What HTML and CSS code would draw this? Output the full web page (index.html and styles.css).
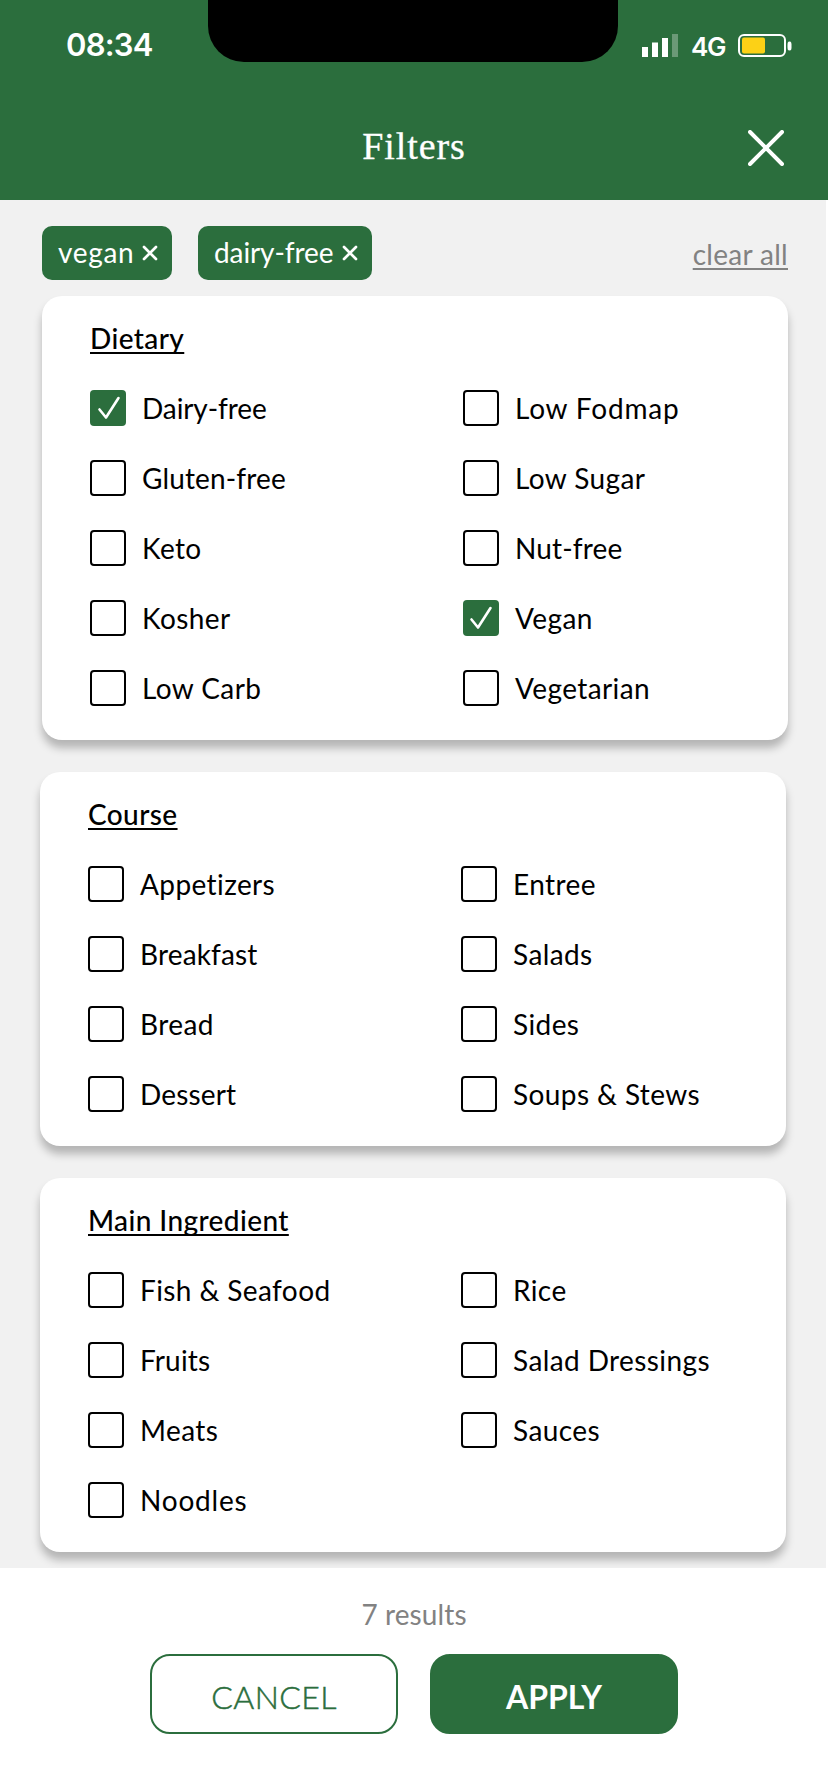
FILE: index.html
```html
<!DOCTYPE html>
<html lang="en">
<head>
<meta charset="utf-8">
<title>Filters</title>
<link rel="stylesheet" href="styles.css">
</head>
<body>
<header class="header">
  <div class="status">
    <span class="time">08:34</span>
    <div class="notch"></div>
    <div class="indicators">
      <svg class="signal" width="36" height="24" viewBox="0 0 36 24"><path fill="#fff" d="M0 14h6v10H0zM10 9.500h6V24h-6zM20 5h6v19h-6z"/><path fill="#fff" opacity=".3" d="M30 1h6v23h-6z"/></svg>
      <span class="network">4G</span>
      <svg class="battery" width="54" height="24" viewBox="0 0 54 24"><rect x="1" y="2" width="46" height="21" rx="5" fill="none" stroke="#fff" stroke-width="2"/><rect x="4" y="4.500" width="23" height="16" rx="2" fill="#fcd116"/><path fill="#fff" d="M51.500 8.500c2 0 2 1.500 2 4.500s0 4.500-2 4.500-2-1.500-2-4.500 0-4.500 2-4.500z"/></svg>
    </div>
  </div>
  <div class="titlebar">
    <h1 class="title">Filters</h1>
    <svg class="close" width="36" height="36" viewBox="0 0 36 36"><path d="M2 2l32 32M34 2L2 34" fill="none" stroke="#fff" stroke-width="4" stroke-linecap="round"/></svg>
  </div>
</header>

<main class="content">
  <div class="chips">
    <span class="chip chip-vegan"><span class="chip-text">vegan</span><svg width="16" height="16" viewBox="0 0 16 16"><path d="M2 2l12 12M14 2L2 14" fill="none" stroke="#fff" stroke-width="2.700" stroke-linecap="round"/></svg></span>
    <span class="chip chip-dairy"><span class="chip-text tight">dairy-free</span><svg width="16" height="16" viewBox="0 0 16 16"><path d="M2 2l12 12M14 2L2 14" fill="none" stroke="#fff" stroke-width="2.700" stroke-linecap="round"/></svg></span>
    <span class="clear">clear all</span>
  </div>

  <section class="card card-first">
    <h2 class="heading">Dietary</h2>
    <div class="options">
      <div class="option tight"><span class="box checked"><svg width="36" height="36" viewBox="0 0 36 36"><path d="M9.500 19.500L16 27.500 28.500 8" fill="none" stroke="#fff" stroke-width="2.600" stroke-linecap="round" stroke-linejoin="round"/></svg></span>Dairy-free</div>
      <div class="option wide"><span class="box"></span>Low Fodmap</div>
      <div class="option snug"><span class="box"></span>Gluten-free</div>
      <div class="option"><span class="box"></span>Low Sugar</div>
      <div class="option"><span class="box"></span>Keto</div>
      <div class="option snug"><span class="box"></span>Nut-free</div>
      <div class="option"><span class="box"></span>Kosher</div>
      <div class="option"><span class="box checked"><svg width="36" height="36" viewBox="0 0 36 36"><path d="M8.500 19.500L15 27.500 27.500 8" fill="none" stroke="#fff" stroke-width="2.600" stroke-linecap="round" stroke-linejoin="round"/></svg></span>Vegan</div>
      <div class="option"><span class="box"></span>Low Carb</div>
      <div class="option"><span class="box"></span>Vegetarian</div>
    </div>
  </section>

  <section class="card">
    <h2 class="heading">Course</h2>
    <div class="options">
      <div class="option"><span class="box"></span>Appetizers</div>
      <div class="option"><span class="box"></span>Entree</div>
      <div class="option snug"><span class="box"></span>Breakfast</div>
      <div class="option"><span class="box"></span>Salads</div>
      <div class="option"><span class="box"></span>Bread</div>
      <div class="option"><span class="box"></span>Sides</div>
      <div class="option snug"><span class="box"></span>Dessert</div>
      <div class="option"><span class="box"></span>Soups &amp; Stews</div>
    </div>
  </section>

  <section class="card">
    <h2 class="heading">Main Ingredient</h2>
    <div class="options">
      <div class="option"><span class="box"></span>Fish &amp; Seafood</div>
      <div class="option"><span class="box"></span>Rice</div>
      <div class="option snug"><span class="box"></span>Fruits</div>
      <div class="option"><span class="box"></span>Salad Dressings</div>
      <div class="option"><span class="box"></span>Meats</div>
      <div class="option"><span class="box"></span>Sauces</div>
      <div class="option wide"><span class="box"></span>Noodles</div>
    </div>
  </section>
</main>

<footer class="footer">
  <div class="results">7 results</div>
  <div class="actions">
    <button class="button cancel">CANCEL</button>
    <button class="button apply">APPLY</button>
  </div>
</footer>
</body>
</html>
```
FILE: styles.css
```css
* { box-sizing: border-box; }
body {
  margin: 0;
  width: 828px;
  height: 1792px;
  overflow: hidden;
  background: #fff;
  color: #000;
  font-family: Lato, "Liberation Sans", sans-serif;
  font-size: 28px;
  letter-spacing: 0.4px;
}
svg { display: block; flex: none; }

.header { height: 200px; background: #2b6e3d; color: #fff; }
.status {
  height: 90px;
  display: grid;
  grid-template-columns: 208px 410px 210px;
  align-items: start;
}
.time {
  padding: 25px 0 0 66px;
  font: 600 31px/40px Inter, sans-serif;
  letter-spacing: -0.8px;
}
.notch { height: 62px; background: #000; border-radius: 0 0 36px 36px; }
.indicators { display: flex; align-items: flex-start; padding: 33px 0 0 24px; }
.network {
  width: 36px;
  margin: -3px 11px 0 13px;
  font: 600 26px/34px Inter, sans-serif;
  letter-spacing: -1.2px;
}
.titlebar {
  height: 110px;
  display: grid;
  grid-template-columns: 1fr auto 1fr;
  padding: 0 44px;
}
.title {
  grid-column: 2;
  margin: 34px 0 0;
  font: 400 38px/44px "Liberation Serif", serif;
  letter-spacing: 0.9px;
  -webkit-text-stroke: 0.3px #fff;
}
.close { justify-self: end; margin-top: 40px; }

.content {
  width: 826px;
  height: 1368px;
  padding: 26px 40px 0;
  background: #f1f1f1;
  overflow: hidden;
}
.chips { height: 54px; display: flex; margin-left: 2px; }
.chip {
  display: flex;
  justify-content: space-between;
  padding: 0 14px 0 16px;
  background: #2b6e3d;
  color: #fff;
  border-radius: 10px;
  line-height: 53px;
}
.chip svg { margin-top: 19px; }
.chip-vegan { width: 130px; letter-spacing: 0.7px; }
.chip-dairy { width: 174px; margin-left: 26px; }
.clear {
  margin: 7px -2px 0 auto;
  line-height: 42px;
  letter-spacing: 0.3px;
  color: #828282;
  text-decoration: underline;
  text-decoration-thickness: 1.5px;
  text-underline-offset: 3px;
  text-decoration-skip-ink: none;
}

.card {
  width: 746px;
  margin-top: 32px;
  padding: 23px 0 34px 48px;
  background: #fff;
  border-radius: 20px;
  box-shadow: 0 8px 8px rgba(0, 0, 0, 0.25);
}
.card-first { margin: 16px 0 0 2px; }
.heading {
  margin: 0 0 33px;
  font-size: 28px;
  line-height: 38px;
  font-weight: 500;
  text-decoration: underline;
  text-decoration-thickness: 1.5px;
  text-underline-offset: 3px;
  text-decoration-skip-ink: none;
}
.options { display: grid; grid-template-columns: 373px 1fr; row-gap: 34px; }
.option { display: flex; gap: 16px; height: 36px; line-height: 37px; }
.tight { letter-spacing: -0.1px; }
.snug { letter-spacing: 0.15px; }
.wide { letter-spacing: 0.8px; }
.box { width: 36px; height: 36px; border: 2px solid #000; border-radius: 4px; }
.checked { border: 0; background: #2b6e3d; }

.footer { height: 224px; padding-top: 25px; text-align: center; }
.results { height: 61px; line-height: 42px; letter-spacing: 0.1px; color: #828282; }
.actions { display: flex; justify-content: center; gap: 32px; }
.button {
  width: 248px;
  height: 80px;
  padding: 5px 0 0;
  border: 2px solid #2b6e3d;
  border-radius: 20px;
  font: 32px/40px Lato, sans-serif;
}
.cancel { background: #fff; color: #2b6e3d; font-weight: 300; letter-spacing: 0.4px; -webkit-text-stroke: 0.5px #2b6e3d; }
.apply { background: #2b6e3d; color: #fff; font-weight: 700; }
```
